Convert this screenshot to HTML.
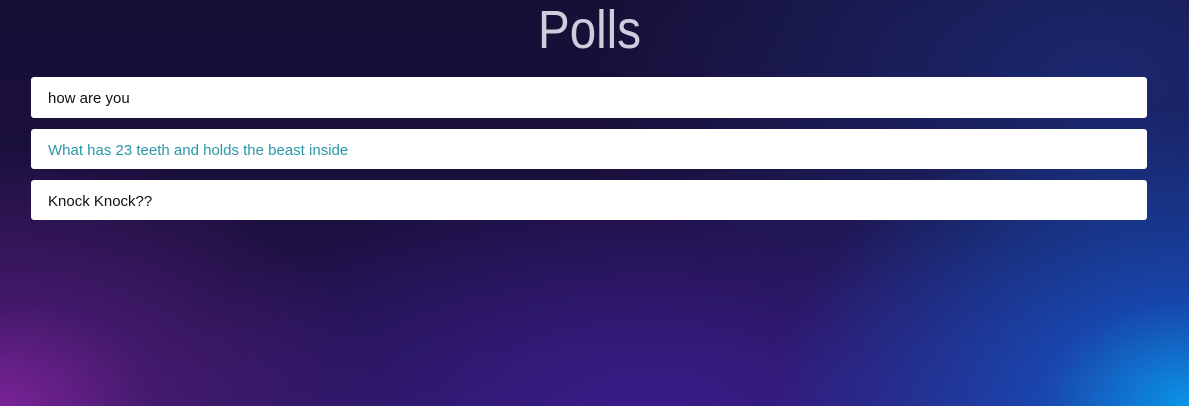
<!DOCTYPE html>
<html><head><style>
html,body{margin:0;padding:0}
body{width:1189px;height:406px;overflow:hidden;position:relative;font-family:"Liberation Sans",sans-serif;
background:
radial-gradient(ellipse 420px 300px at 1189px 406px,#0a95e8 0%,rgba(20,90,210,.7) 35%,rgba(30,40,150,0) 100%),
radial-gradient(ellipse 380px 260px at 0px 406px,#7a2396 0%,rgba(90,30,130,.6) 40%,rgba(60,20,90,0) 100%),
radial-gradient(ellipse 500px 250px at 650px 420px,#3a1d8c 0%,rgba(50,25,120,0) 100%),
radial-gradient(ellipse 500px 300px at 1100px 80px,#1b2870 0%,rgba(20,30,90,0) 100%),
linear-gradient(180deg,#170f36 0%,#1c1040 60%,#241452 100%);}
h1{position:absolute;top:2px;left:-5px;width:1189px;margin:0;text-align:center;color:rgba(240,238,250,.85);font-weight:normal;font-size:54px;line-height:56px;transform:scaleX(.88)}
.c{position:absolute;left:31px;width:1116px;background:#fff;border-radius:3px;font-size:15px;color:#111;box-sizing:border-box;padding-left:17px}
</style></head><body>
<h1>Polls</h1>
<div class="c" style="top:77px;height:41px;line-height:44px">how are you</div>
<div class="c" style="top:129px;height:40px;line-height:43px;color:#2a98a8">What has 23 teeth and holds the beast inside</div>
<div class="c" style="top:180px;height:40px;line-height:43px">Knock Knock??</div>
</body></html>
